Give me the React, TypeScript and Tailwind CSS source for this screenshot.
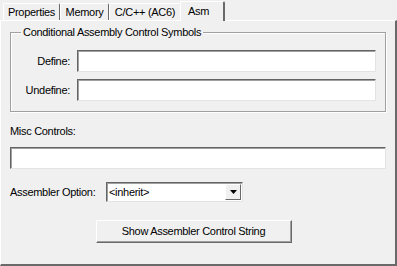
import React from 'react';

const tabs = [
  { label: 'Properties', w: 'w-[57px]' },
  { label: 'Memory', w: 'w-[49px]' },
  { label: 'C/C++ (AC6)', w: 'w-[72px]' },
];

const Sunken: React.FC<{ className?: string; children?: React.ReactNode }> = ({ className = '', children }) => (
  <div className={`bg-white border border-t-[#646464] border-l-[#646464] border-r-[#e3e3e3] border-b-[#e3e3e3] shadow-[inset_1px_1px_0_#a0a0a0] ${className}`}>
    {children}
  </div>
);

const App: React.FC = () => {
  return (
    <div className="w-[397px] h-[266px] bg-[#f0f0f0] text-[11px] tracking-[-0.3px] text-black flex flex-col overflow-hidden" style={{ fontFamily: '"Liberation Sans", Arial, sans-serif' }}>
      {/* tab strip */}
      <div className="h-[20px] flex items-end pl-[3px] relative z-10">
        {tabs.map((t) => (
          <div
            key={t.label}
            className={`${t.w} h-[17px] flex items-center justify-center border-t border-l border-white border-r border-r-[#696969] rounded-tl-[2px] rounded-tr-[2px] leading-none`}
          >
            {t.label}
          </div>
        ))}
        <div className="h-[20px] w-[45px] -ml-[1px] -mb-px bg-[#f0f0f0] flex items-start pt-[4px] pl-[7px] border-t border-l border-white border-r-2 border-r-[#696969] rounded-tl-[2px] rounded-tr-[2px] leading-none">
          Asm
        </div>
      </div>

      {/* tab page */}
      <div className="flex-1 border-t border-l border-white border-r-2 border-r-[#696969] border-b-2 border-b-[#696969] px-[9px] flex flex-col">
        {/* group box */}
        <div className="relative mt-[11px] h-[80px] border border-[#a0a0a0] shadow-[1px_1px_0_#fff,inset_1px_1px_0_#fff] flex flex-col gap-[7px] pt-[17px] pr-[9px]">
          <span className="absolute -top-[7px] left-[10px] px-[2px] bg-[#f0f0f0] leading-[13px]">
            Conditional Assembly Control Symbols
          </span>
          <div className="flex items-center">
            <span className="w-[59px] shrink-0 text-right">Define:</span>
            <Sunken className="ml-[7px] h-[22px] flex-1" />
          </div>
          <div className="flex items-center">
            <span className="w-[59px] shrink-0 text-right">Undefine:</span>
            <Sunken className="ml-[7px] h-[22px] flex-1" />
          </div>
        </div>

        <div className="mt-[13px] leading-[13px]">Misc Controls:</div>
        <Sunken className="mt-[9px] h-[22px]" />

        <div className="mt-[13px] flex items-center">
          <span className="w-[96px] shrink-0">Assembler Option:</span>
          <Sunken className="w-[137px] h-[20px] flex items-center justify-between pl-[2px] pr-[1px]">
            <span className="leading-none">&lt;inherit&gt;</span>
            <div className="w-[16px] h-[16px] bg-[#f0f0f0] border border-t-white border-l-white border-r-[#696969] border-b-[#696969] flex items-center justify-center">
              <svg width="7" height="4" viewBox="0 0 7 4">
                <path d="M0 0h7L3.5 4z" fill="#000" />
              </svg>
            </div>
          </Sunken>
        </div>

        <div className="mt-[18px] flex justify-center pr-[9px]">
          <button className="w-[196px] h-[23px] bg-[#f0f0f0] border border-t-white border-l-white border-r-[#696969] border-b-[#696969] shadow-[inset_-1px_-1px_0_#a0a0a0] leading-none tracking-[-0.3px]">
            Show Assembler Control String
          </button>
        </div>
      </div>
    </div>
  );
};

export default App;
